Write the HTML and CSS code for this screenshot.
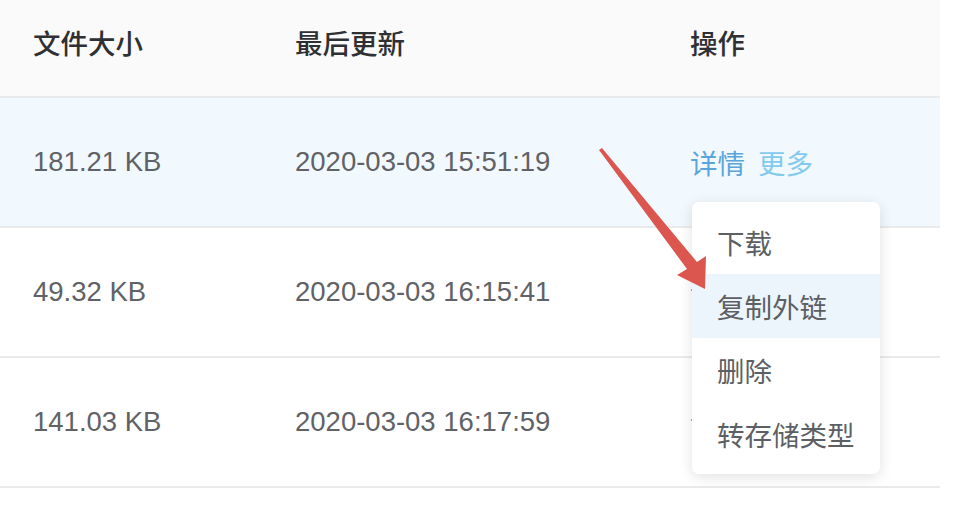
FILE: index.html
```html
<!DOCTYPE html>
<html lang="zh-CN">
<head>
<meta charset="utf-8">
<title>文件列表</title>
<link rel="stylesheet" href="styles.css">
</head>
<body>
<div class="page">
  <div class="table">
    <div class="row head">
      <div class="cell">文件大小</div>
      <div class="cell">最后更新</div>
      <div class="cell">操作</div>
    </div>
    <div class="row hover">
      <div class="cell">181.21 KB</div>
      <div class="cell">2020-03-03 15:51:19</div>
      <div class="cell ops"><span class="link">详情</span><span class="link more">更多</span></div>
    </div>
    <div class="row">
      <div class="cell">49.32 KB</div>
      <div class="cell">2020-03-03 16:15:41</div>
      <div class="cell ops"><span class="link">详情</span><span class="link more">更多</span></div>
    </div>
    <div class="row">
      <div class="cell">141.03 KB</div>
      <div class="cell">2020-03-03 16:17:59</div>
      <div class="cell ops"><span class="link">详情</span><span class="link more">更多</span></div>
    </div>
  </div>

  <ul class="menu">
    <li class="item">下载</li>
    <li class="item active">复制外链</li>
    <li class="item">删除</li>
    <li class="item">转存储类型</li>
  </ul>

  <svg class="arrow" width="964" height="532" viewBox="0 0 964 532">
    <polygon points="599,150 602,148 697,262 706,256 705,289 677,275 687,269" fill="#dc5650"/>
  </svg>
</div>
</body>
</html>
```

FILE: styles.css
```css
* { box-sizing: border-box; }
html, body {
  margin: 0;
  padding: 0;
  background: #ffffff;
}
body {
  font-family: "Liberation Sans", Arial, "Noto Sans CJK SC", sans-serif;
  color: #5f6266;
}
.page {
  position: relative;
  width: 964px;
  height: 532px;
  overflow: hidden;
}
.table {
  width: 940px;
}
.row {
  display: grid;
  grid-template-columns: 262px 395px 1fr;
  height: 130px;
  border-bottom: 2px solid #e9eaec;
  align-items: center;
  font-size: 27.5px;
}
.row.head {
  height: 98px;
  background: #fafafa;
  color: #2f3033;
  font-weight: 500;
  font-family: "Noto Sans CJK SC", sans-serif;
  font-size: 27.5px;
  padding-bottom: 12px;
}
.row.hover {
  background: #f2f9fe;
}
.cell {
  padding-left: 33px;
  white-space: nowrap;
}
.ops {
  display: flex;
  gap: 13px;
  font-family: "Noto Sans CJK SC", sans-serif;
}
.link { color: #5aa5dc; }
.link.more { color: #84caee; }

.menu {
  position: absolute;
  left: 692px;
  top: 202px;
  width: 188px;
  margin: 0;
  padding: 8px 0;
  list-style: none;
  background: #ffffff;
  border-radius: 7px;
  box-shadow: 0 3px 14px rgba(0, 0, 0, 0.12);
  font-family: "Noto Sans CJK SC", sans-serif;
  font-size: 27.5px;
  color: #5c5f63;
}
.item {
  height: 64px;
  line-height: 64px;
  padding-left: 25px;
  white-space: nowrap;
}
.item.active {
  background: #ecf5fb;
}
.arrow {
  position: absolute;
  left: 0;
  top: 0;
  pointer-events: none;
}
```
